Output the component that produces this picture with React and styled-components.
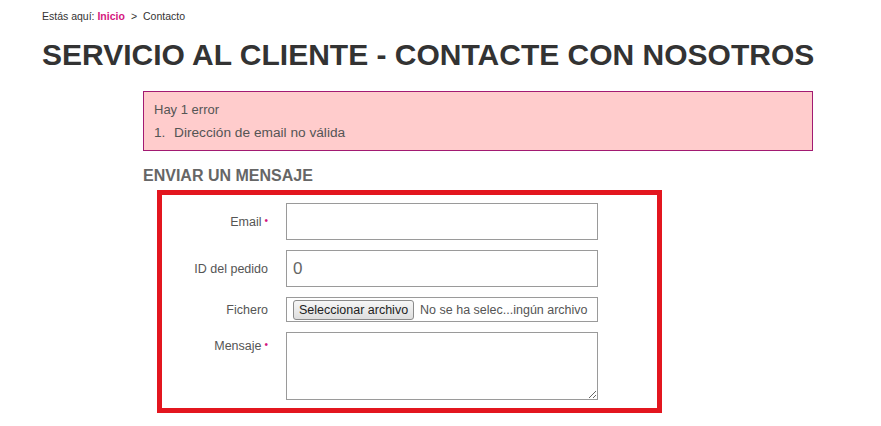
import React from "react";
import styled, { createGlobalStyle } from "styled-components";

const GlobalStyle = createGlobalStyle`
  body {
    margin: 0;
    background: #fff;
    font-family: "Liberation Sans", Arial, sans-serif;
    color: #333;
  }
`;

const Page = styled.div`
  padding: 9px 0 0 42px;
  width: 800px;
`;

const Breadcrumb = styled.div`
  font-size: 10.5px;
  line-height: 14px;
  color: #333;
`;

const HomeLink = styled.a`
  color: #d5177e;
  font-weight: bold;
  text-decoration: none;
`;

const Sep = styled.span`
  margin: 0 6px;
`;

const Title = styled.h1`
  margin: 14px 0 0 0;
  font-size: 30px;
  line-height: 36px;
  font-weight: bold;
  color: #333;
  white-space: nowrap;
`;

const Content = styled.div`
  margin: 18px 0 0 101px;
  width: 670px;
`;

const ErrorBox = styled.div`
  box-sizing: border-box;
  background: #ffcccc;
  border: 1px solid #a21a72;
  padding: 7px 10px 8px 10px;
  height: 60px;
  font-size: 13px;
  color: #555;
`;

const ErrorLine = styled.p`
  margin: 0;
  line-height: 22px;
`;

const ErrorList = styled.ol`
  margin: 0;
  padding: 0;
  list-style: none;
  line-height: 23px;
  font-size: 13.7px;
`;

const ErrorItem = styled.li`
  &::before {
    content: "1.";
    display: inline-block;
    width: 20px;
  }
`;

const SubTitle = styled.h3`
  margin: 15px 0 0 0;
  font-size: 16px;
  line-height: 19px;
  font-weight: bold;
  color: #666;
`;

const FormFrame = styled.form`
  box-sizing: border-box;
  margin: 5px 0 0 14px;
  width: 505px;
  height: 223px;
  border: 5px solid #e3161f;
  padding: 8px 0 0 0;
  display: grid;
  grid-template-columns: 106px 312px;
  column-gap: 18px;
  row-gap: 10px;
  align-content: start;
`;

const Label = styled.label`
  font-size: 12.5px;
  color: #555;
  text-align: right;
  align-self: ${(p) => (p.$top ? "start" : "center")};
  padding-top: ${(p) => (p.$top ? "7px" : "1px")};
`;

const Req = styled.sup`
  color: #d5177e;
  font-size: 10px;
  margin-left: 3px;
  vertical-align: 2px;
`;

const TextInput = styled.input`
  box-sizing: border-box;
  width: 312px;
  height: 37px;
  border: 1px solid #9a9a9a;
  padding: 0 6px;
  font-family: "Liberation Sans", Arial, sans-serif;
  font-size: 17px;
  color: #666;
  background: #fff;
  outline: none;
`;

const FileBox = styled.div`
  box-sizing: border-box;
  width: 312px;
  height: 25px;
  border: 1px solid #9a9a9a;
  display: flex;
  align-items: center;
  padding: 0 6px;
  gap: 6px;
  font-size: 12.5px;
  color: #555;
  white-space: nowrap;
  overflow: hidden;
`;

const FileButton = styled.button`
  height: 20px;
  padding: 0 5px;
  border: 1px solid #8a8a8a;
  border-radius: 3px;
  background: linear-gradient(#f6f6f6, #dedede);
  font-family: "Liberation Sans", Arial, sans-serif;
  font-size: 12.5px;
  color: #222;
`;

const TextArea = styled.textarea`
  box-sizing: border-box;
  width: 312px;
  height: 68px;
  border: 1px solid #9a9a9a;
  resize: vertical;
  font-family: "Liberation Sans", Arial, sans-serif;
  outline: none;
`;

export default function App() {
  return (
    <>
      <GlobalStyle />
      <Page>
        <Breadcrumb>
          Estás aquí: <HomeLink href="#">Inicio</HomeLink>
          <Sep>&gt;</Sep>Contacto
        </Breadcrumb>
        <Title>SERVICIO AL CLIENTE - CONTACTE CON NOSOTROS</Title>
        <Content>
          <ErrorBox>
            <ErrorLine>Hay 1 error</ErrorLine>
            <ErrorList>
              <ErrorItem>Dirección de email no válida</ErrorItem>
            </ErrorList>
          </ErrorBox>
          <SubTitle>ENVIAR UN MENSAJE</SubTitle>
          <FormFrame onSubmit={(e) => e.preventDefault()}>
            <Label>
              Email<Req>•</Req>
            </Label>
            <TextInput type="text" defaultValue="" />
            <Label>ID del pedido</Label>
            <TextInput type="text" defaultValue="0" />
            <Label>Fichero</Label>
            <FileBox>
              <FileButton type="button">Seleccionar archivo</FileButton>
              <span>No se ha selec...ingún archivo</span>
            </FileBox>
            <Label $top>
              Mensaje<Req>•</Req>
            </Label>
            <TextArea />
          </FormFrame>
        </Content>
      </Page>
    </>
  );
}
